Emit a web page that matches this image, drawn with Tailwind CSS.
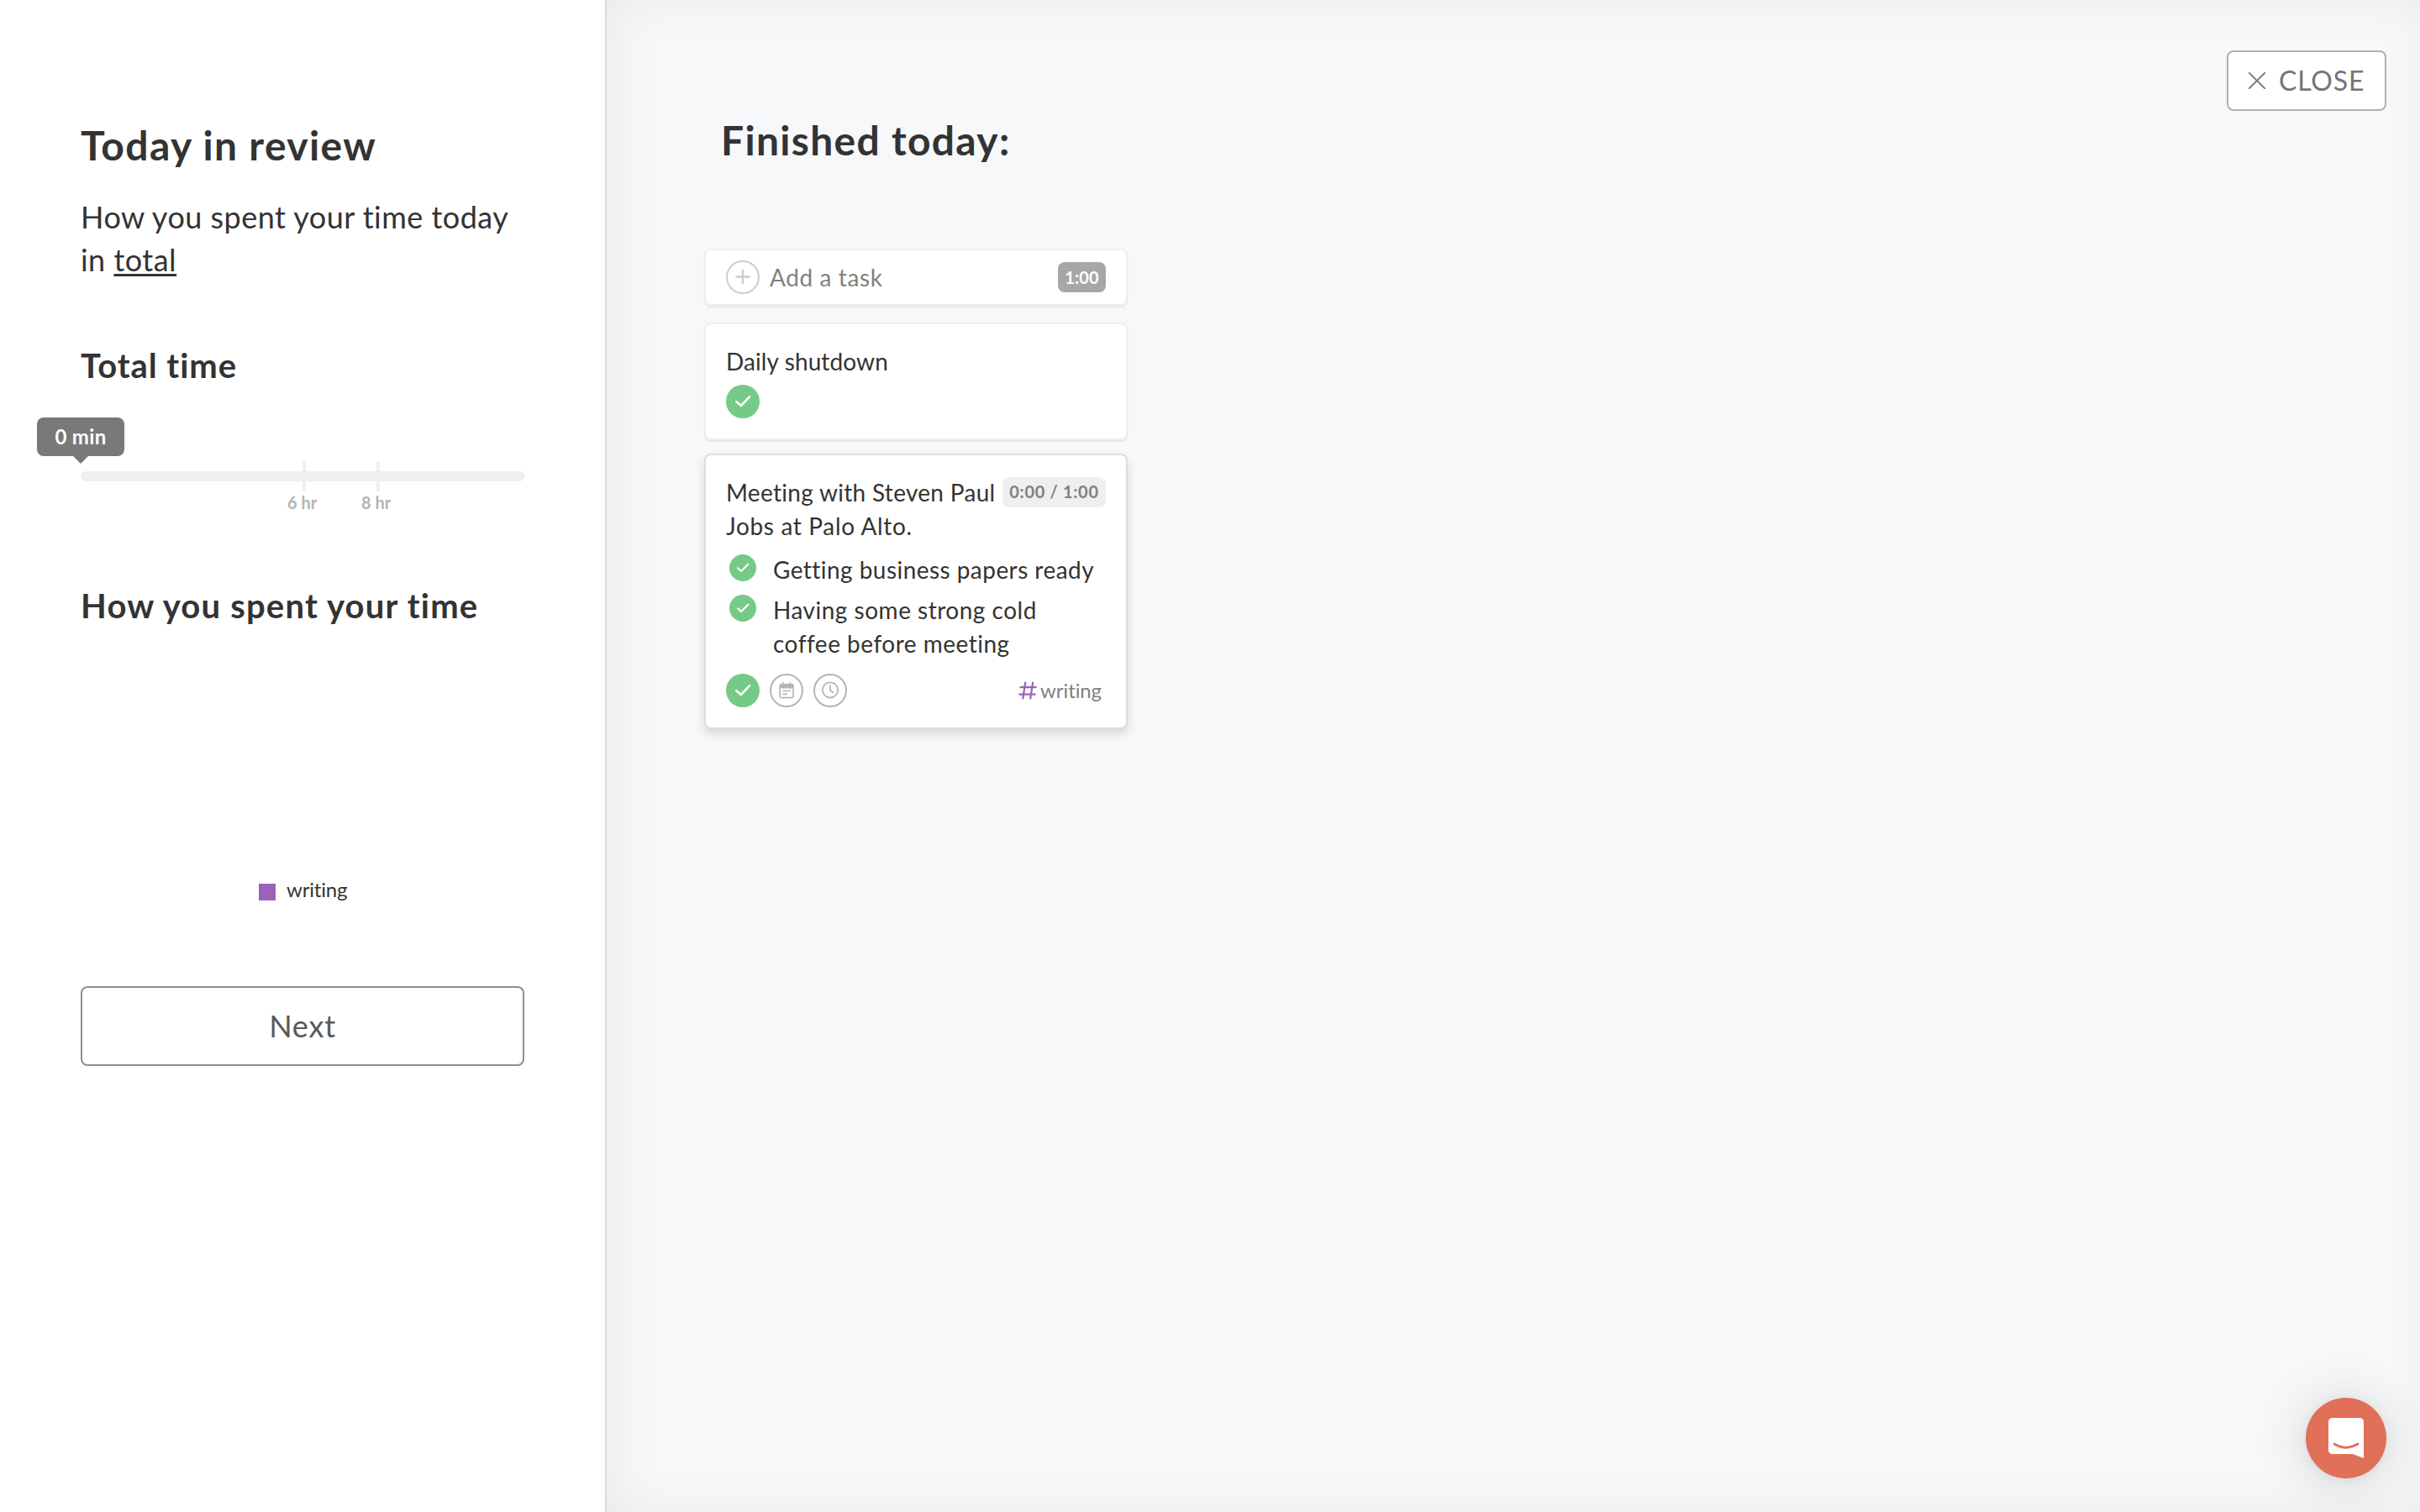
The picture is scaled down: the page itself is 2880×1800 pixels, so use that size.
<!DOCTYPE html>
<html lang="en">

<head>
    <meta charset="UTF-8">
    <meta name="viewport" content="width=device-width, initial-scale=1.0">
    <title>Today in review</title>
    <script src="https://cdn.jsdelivr.net/npm/@tailwindcss/browser@4"></script>
</head>

<body class="font-[Lato,sans-serif] text-[#333333] bg-white">
    <div class="flex h-[1800px] w-[2880px] overflow-hidden">

        <!-- Sidebar -->
        <aside class="w-[722px] shrink-0 border-r-2 border-[#dcdcdc] bg-white pl-24 pr-24 pt-[145px]">
            <h1 class="text-[48px] leading-[56px] font-bold tracking-[1.35px]">Today in review</h1>
            <p class="mt-8 text-[36px] leading-[51px] tracking-[0.48px] whitespace-nowrap">How you spent your time today<br>in <span class="underline decoration-[3px] underline-offset-[3px] tracking-[0.5px]">total</span></p>

            <h2 class="mt-[76px] text-[40px] leading-[48px] font-bold tracking-[0.95px]">Total time</h2>
            <div class="relative mt-[102px] h-3 w-[528px] rounded-md bg-[#efefef]">
                <div class="absolute -left-[52px] -top-16 w-[104px] h-[46px] rounded-lg bg-[#797979] text-white text-[24px] leading-[45px] font-bold text-center tracking-[0.3px]">
                    0 min
                    <svg class="absolute left-[42px] top-[45px]" width="20" height="10" viewBox="0 0 20 10"><path d="M0 0H20L10 10Z" fill="#797979" /></svg>
                </div>
                <div class="absolute left-[264px] -top-3 w-1 h-9 bg-[#efefef]"></div>
                <div class="absolute left-[352px] -top-3 w-1 h-9 bg-[#efefef]"></div>
                <span class="absolute left-[246px] top-[25px] text-[20px] leading-6 font-bold text-[#b4b4b4]">6 hr</span>
                <span class="absolute left-[334px] top-[25px] text-[20px] leading-6 font-bold text-[#b4b4b4]">8 hr</span>
            </div>

            <h2 class="mt-[124px] text-[40px] leading-[48px] font-bold tracking-[1.2px] whitespace-nowrap">How you spent your time</h2>
            <div class="mt-[298px] flex items-center h-8 pl-[212px]">
                <span class="mt-[6px] size-5 bg-[#9b63b8]"></span>
                <span class="ml-[13px] text-[24px] leading-8 tracking-[-0.2px]">writing</span>
            </div>
            <button class="mt-[99px] block w-[528px] h-[95px] pb-px rounded-lg border-2 border-[#8f8f8f] text-[36px] text-[#595959] tracking-[0.8px]">Next</button>
        </aside>

        <!-- Main -->
        <main class="relative grow bg-[#f7f8fa] pl-[116px] pt-[139px] shadow-[inset_10px_0_60px_rgba(0,0,0,0.055)]">
            <h1 class="ml-[20px] text-[48px] leading-[56px] font-bold tracking-[1.3px]">Finished today:</h1>

            <div class="mt-[101px] w-[504px] flex flex-col text-[28px] leading-10">
                <div class="h-[68px] flex items-center pl-6 pr-6 rounded-lg border-2 border-[#efefef] bg-white shadow-[0_2px_2px_rgba(0,0,0,0.08)]">
                    <svg width="40" height="40" viewBox="0 0 40 40" fill="none" stroke="#cdcdcd" stroke-width="2">
                        <circle cx="20" cy="20" r="19" />
                        <path d="M12.5 19.5H27.5M20 12V27" stroke-width="2.4" stroke-linecap="round" />
                    </svg>
                    <span class="ml-3 mb-px text-[#808080] tracking-[0.6px]">Add a task</span>
                    <span class="ml-auto w-[57px] h-9 rounded-lg bg-[#a7a7a7] text-center text-[20px] leading-[36px] font-bold text-white tracking-[0.2px]">1:00</span>
                </div>

                <div class="mt-5 h-[140px] pl-6 pt-6 rounded-lg border-2 border-[#efefef] bg-white shadow-[0_2px_2px_rgba(0,0,0,0.08)]">
                    <div class="tracking-[0.1px]">Daily shutdown</div>
                    <svg class="mt-2" width="40" height="40" viewBox="0 0 40 40" fill="none">
                        <circle cx="20" cy="20" r="20" fill="#75ca87" />
                        <path d="M12.3 20.2L17.8 25L28 14.3" stroke="#fff" stroke-width="2.6" stroke-linecap="round" stroke-linejoin="round" />
                    </svg>
                </div>

                <div class="mt-4 h-[328px] pl-6 pr-6 pt-6 rounded-lg border-2 border-[#dcdcdc] bg-white shadow-[0_6px_12px_rgba(0,0,0,0.13)]">
                    <div class="flex justify-between whitespace-nowrap">
                        <div class="tracking-[0.3px]">Meeting with Steven Paul<br><span class="tracking-[0.65px]">Jobs at Palo Alto.</span></div>
                        <span class="mt-[2px] w-[123px] h-9 rounded-lg bg-[#efefef] text-center text-[20px] leading-[35px] font-bold text-[#808080] tracking-[0.67px]">0:00 / 1:00</span>
                    </div>
                    <div class="mt-3 flex gap-[21px] pl-1">
                        <svg class="mt-[2px] shrink-0" width="32" height="32" viewBox="0 0 32 32" fill="none">
                            <circle cx="16" cy="16" r="16" fill="#75ca87" />
                            <path d="M10 16.3L14 20L22.3 11.8" stroke="#fff" stroke-width="2.1" stroke-linecap="round" stroke-linejoin="round" />
                        </svg>
                        <div class="-ml-px whitespace-nowrap tracking-[0.45px]">Getting business papers ready</div>
                    </div>
                    <div class="mt-2 flex gap-[21px] pl-1">
                        <svg class="mt-[2px] shrink-0" width="32" height="32" viewBox="0 0 32 32" fill="none">
                            <circle cx="16" cy="16" r="16" fill="#75ca87" />
                            <path d="M10 16.3L14 20L22.3 11.8" stroke="#fff" stroke-width="2.1" stroke-linecap="round" stroke-linejoin="round" />
                        </svg>
                        <div class="-ml-px whitespace-nowrap tracking-[0.5px]">Having some strong cold<br>coffee before meeting</div>
                    </div>
                    <div class="mt-4 flex items-center h-10">
                        <svg width="40" height="40" viewBox="0 0 40 40" fill="none">
                            <circle cx="20" cy="20" r="20" fill="#75ca87" />
                            <path d="M12.3 20.2L17.8 25L28 14.3" stroke="#fff" stroke-width="2.6" stroke-linecap="round" stroke-linejoin="round" />
                        </svg>
                        <!-- calendar -->
                        <svg class="ml-3" width="40" height="40" viewBox="0 0 40 40" fill="none" stroke="#b4b4b4" stroke-width="1.6" stroke-linecap="round">
                            <circle cx="20" cy="20" r="19" stroke-width="2" />
                            <rect x="12.2" y="12.8" width="15.8" height="15.8" rx="1.6" />
                            <path d="M12 12.5H28V17.5H12Z" fill="#b4b4b4" stroke="none" />
                            <path d="M15.8 10.5V13M24.4 10.5V13M16 20.5H24.2M16 24.4H20.4" />
                        </svg>
                        <!-- clock -->
                        <svg class="ml-3" width="40" height="40" viewBox="0 0 40 40" fill="none" stroke="#b4b4b4" stroke-width="1.8" stroke-linecap="round" stroke-linejoin="round">
                            <circle cx="20" cy="20" r="19" stroke-width="2" />
                            <circle cx="20" cy="19.4" r="9.1" />
                            <path d="M20 14.4V20L23.6 22.4" />
                        </svg>
                        <svg class="ml-auto" width="22" height="22" viewBox="0 0 22 22" fill="none" stroke="#9b63b8" stroke-width="2.2" stroke-linecap="round">
                            <path d="M8.3 1.5L5.3 20.5M17.2 1.5L14.2 20.5M2.5 7.2H20.7M1.3 15.7H19.6" />
                        </svg>
                        <span class="ml-1 mr-[5px] mb-px text-[24px] text-[#808080] tracking-[-0.1px]">writing</span>
                    </div>
                </div>
            </div>

            <button class="absolute left-[1928px] top-[60px] w-[190px] h-[72px] flex items-center pl-6 rounded-lg border-2 border-[#b0b0b0] bg-white text-[#757575]">
                <svg width="20" height="20" viewBox="0 0 20 20" stroke="currentColor" stroke-width="1.8" stroke-linecap="round"><path d="M0.8 0.8L19.2 19.2M19.2 0.8L0.8 19.2" /></svg>
                <span class="ml-4 mb-px text-[32px] leading-10 tracking-[0.8px]">CLOSE</span>
            </button>

            <!-- Chat launcher -->
            <div class="absolute left-[2022px] top-[1664px] size-24 rounded-full bg-[#e07058] shadow-[0_2px_12px_rgba(0,0,0,0.06),0_4px_64px_rgba(0,0,0,0.16)]">
                <svg width="96" height="96" viewBox="0 0 96 96" fill="none">
                    <path d="M32 24H64Q69 24 69 29V72L56 67H32Q27 67 27 62V29Q27 24 32 24Z" fill="#fff" />
                    <path d="M34 55Q48 63.5 62 55" stroke="#e07058" stroke-width="2.8" stroke-linecap="round" />
                </svg>
            </div>
        </main>
    </div>
</body>

</html>
